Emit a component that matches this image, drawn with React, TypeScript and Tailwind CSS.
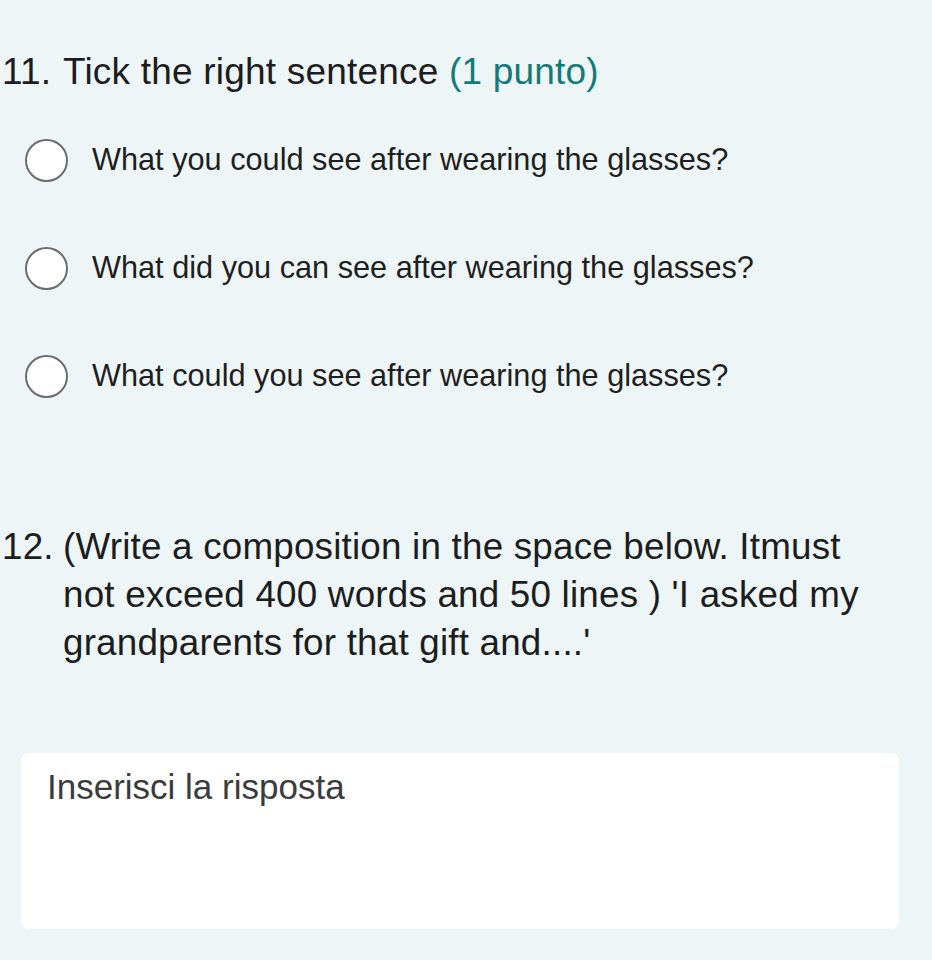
const options = [
  "What you could see after wearing the glasses?",
  "What did you can see after wearing the glasses?",
  "What could you see after wearing the glasses?",
];

export default function App() {
  return (
    <div
      className="min-h-[960px] w-full bg-[#eef5f6] text-[#1c1d1f] pt-[48px]"
      style={{ fontFamily: '"Liberation Sans", Arial, sans-serif' }}
    >
      {/* Question 11 */}
      <div className="flex pl-[2px] text-[37px] leading-[48px] tracking-[0.2px]">
        <span className="w-[61px] shrink-0">11.</span>
        <span>
          Tick the right sentence{" "}
          <span className="text-[#137a7c]">(1 punto)</span>
        </span>
      </div>

      <div className="mt-[10px] flex flex-col">
        {options.map((o) => (
          <label key={o} className="flex h-[108px] items-center pl-[25px]">
            <span className="h-[43px] w-[43px] shrink-0 rounded-full border-2 border-[#6a6c6e] bg-white" />
            <span className="ml-[24px] text-[30.7px] leading-[40px] text-[#1e1f21]">
              {o}
            </span>
          </label>
        ))}
      </div>

      {/* Question 12 */}
      <div className="mt-[93px] flex pl-[2px] text-[36.8px] leading-[48px] tracking-[0.2px]">
        <span className="w-[61px] shrink-0">12.</span>
        <span className="w-[820px]">
          (Write a composition in the space below. Itmust not exceed 400 words
          and 50 lines ) 'I asked my grandparents for that gift and....'
        </span>
      </div>

      <div className="mx-[21px] mt-[86px] h-[176px] w-[878px] rounded-[8px] bg-white pl-[26px] pt-[14px]">
        <span className="text-[35px] leading-[40px] text-[#3a3b3d]">
          Inserisci la risposta
        </span>
      </div>
    </div>
  );
}
